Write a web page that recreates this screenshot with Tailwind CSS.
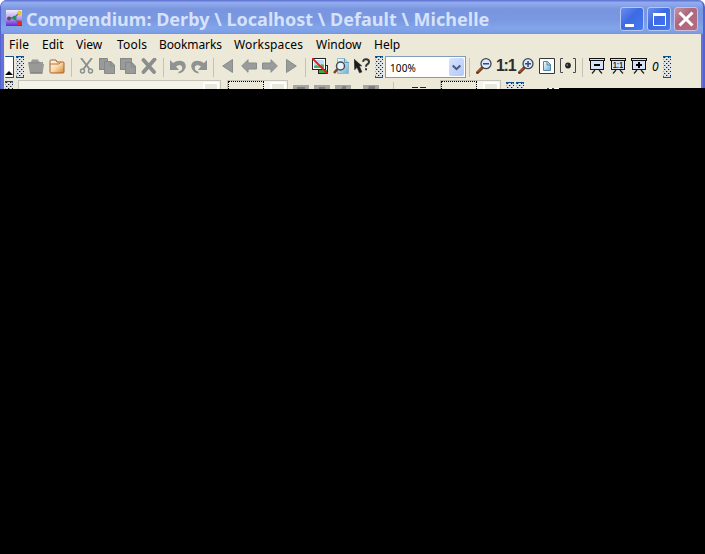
<!DOCTYPE html>
<html lang="en">
<head>
<meta charset="utf-8">
<title>Compendium</title>
<script src="https://cdn.jsdelivr.net/npm/@tailwindcss/browser@4"></script>
</head>
<body class="bg-black w-[705px] h-[554px] overflow-hidden font-['Noto_Sans',sans-serif]">
<svg class="absolute w-0 h-0">
<defs>
<pattern id="dots" width="4" height="4" patternUnits="userSpaceOnUse"><rect width="4" height="4" fill="#dfe3e3"/><path d="M1 1h1v1H1zM3 3h1v1H3z" fill="#1c2024"/><path d="M2 1h1v1H2zM0 3h1v1H0z" fill="#a4a9ac"/></pattern>
<linearGradient id="orange" x1="0" y1="0" x2="1" y2="1"><stop offset="0" stop-color="#fff9ea"/><stop offset=".5" stop-color="#f9dcb0"/><stop offset="1" stop-color="#dc8128"/></linearGradient>
<linearGradient id="logo" x1="0" y1="0" x2="0" y2="1"><stop offset="0" stop-color="#f3edff"/><stop offset=".5" stop-color="#b6a0ee"/><stop offset="1" stop-color="#6525d0"/></linearGradient>
<linearGradient id="sky" x1="0" y1="0" x2="1" y2="1"><stop offset="0" stop-color="#fff"/><stop offset="1" stop-color="#6faed0"/></linearGradient>
<symbol id="grip" viewBox="0 0 8 22"><rect width="8" height="22" fill="url(#dots)"/><path d="M0 0h8v1H0zM0 21h8v1H0z" fill="#12508f"/><path d="M0 1h1v1H0zM7 1h1v1H7zM0 20h1v1H0zM7 20h1v1H7z" fill="#31679d"/></symbol>
<symbol id="lens" viewBox="0 0 16 16"><path d="M6 10L1.500 14.500" stroke="#6e3213" stroke-width="3" stroke-linecap="round"/><path d="M5.500 10L1.500 14" stroke="#c77745" stroke-width="1"/><circle cx="10" cy="5.700" r="5" fill="#d8e8ff" stroke="#42464e" stroke-width="1.300"/></symbol>
<symbol id="board" viewBox="0 0 16 16"><path d="M6 12L3 15.500M10 12l3 3.500" stroke="#222" stroke-width="1.200"/><path d="M1 3h14v9H1z" fill="#111"/><path d="M2 3h12v8H2z" fill="#d4e2fa"/><path d="M0 0h16v3H0z" fill="#111"/><path d="M1 1h14v1H1z" fill="#d8e2f4"/></symbol>
</defs>
</svg>
<div class="relative w-[705px] h-[89px] overflow-hidden bg-white">
<div class="w-full h-full flex flex-col overflow-hidden rounded-t-[7px] bg-[#6372dc] border-l border-r-2 border-[#5364cf]">
  <header class="h-[34px] shrink-0 flex items-center bg-[linear-gradient(180deg,#6379d5_0,#6379d5_1px,#91acee_2px,#8ba5ea_5px,#7995df_9px,#7a98e1_20px,#82a5ea_28px,#7d9ee6_32px,#7694e0_34px)]">
    <svg class="ml-[5px] w-4 h-4 shrink-0 mt-[2px]" viewBox="0 0 16 16"><rect width="16" height="16" fill="url(#logo)"/><path d="M3 8h5l5-5M8 8l5 5" stroke="#6d6485" stroke-width="1.300" fill="none"/><circle cx="3" cy="8.500" r="1.900" fill="#55505c"/><circle cx="8.500" cy="7.800" r="2.100" fill="#179b45"/><circle cx="13.500" cy="2.700" r="2.200" fill="#e5c91d"/><circle cx="13.500" cy="13" r="2.400" fill="#e42924"/></svg>
    <h1 class="ml-[4px] mt-[4px] w-[594px] shrink-0 whitespace-nowrap text-[18px] leading-[24px] font-bold text-[#d6e2fb] tracking-[0.02px]">Compendium: Derby \ Localhost \ Default \ Michelle</h1>
    <div class="flex gap-[3px] mt-[3px]">
      <div class="w-[24px] h-[24px] rounded-[3px] border border-[#b4c8f5] bg-[linear-gradient(135deg,#6b8fee,#3d6ae2_45%,#477af0)]"><svg class="w-full h-full" viewBox="0 0 22 22"><path d="M4 16h9v3H4z" fill="#fff"/></svg></div>
      <div class="w-[24px] h-[24px] rounded-[3px] border border-[#b4c8f5] bg-[linear-gradient(135deg,#6b8fee,#3d6ae2_45%,#477af0)]"><svg class="w-full h-full" viewBox="0 0 22 22"><path d="M5.500 6.500h12v11h-12z" fill="none" stroke="#fff"/><path d="M5 5h13v3H5z" fill="#fff"/></svg></div>
      <div class="w-[24px] h-[24px] rounded-[3px] border border-[#d2bcdc] bg-[linear-gradient(135deg,#c5949f,#ad687e_40%,#b56c7e)]"><svg class="w-full h-full" viewBox="0 0 22 22"><path d="M4.500 4.500l13 13M17.500 4.500l-13 13" stroke="#fff" stroke-width="3"/></svg></div>
    </div>
  </header>
  <main class="h-[55px] ml-[3px] mr-[2px] bg-[#ece9d8] overflow-hidden">
    <nav class="h-[22px] pl-[5px] flex items-center text-[12px] leading-[22px] text-black whitespace-nowrap">
      <span class="w-[33px] tracking-[.3px]">File</span><span class="w-[34px]">Edit</span><span class="w-[41px]">View</span><span class="w-[42px] tracking-[.2px]">Tools</span><span class="w-[75px] tracking-[-.1px]">Bookmarks</span><span class="w-[82px] tracking-[.15px]">Workspaces</span><span class="w-[58px]">Window</span><span>Help</span>
    </nav>
    <div class="h-[22px] pl-[1px] flex items-center [&>*]:shrink-0 [&>svg.h-4]:mb-[2px]">
      <div class="w-[9px] h-[22px] rounded-[1px] bg-white border-y border-r border-[#164e87] flex items-end"><svg class="w-[8px] h-[7px]" viewBox="0 0 8 7"><path d="M4 1l4 4H0z" fill="#000"/></svg></div>
      <svg class="ml-[2px] w-[8px] h-[22px]"><use href="#grip"/></svg>
      <svg class="ml-[4px] w-4 h-4" viewBox="0 0 16 16"><path d="M0 4h3l1-2.500h6l1 2.500h4v2h1l-1.500 10H2z" fill="#999a98"/><path d="M1 5h9l2-1M3 14.500h11" stroke="#858786" fill="none"/></svg>
      <svg class="ml-[5px] w-4 h-4" viewBox="0 0 16 16"><path d="M1 14V3q0-1 1-1h5l1 2h6q1 0 1 1v9q0 1-1 1H2q-1 0-1-1z" fill="url(#orange)" stroke="#a56330"/><path d="M1 6h9l2-2" stroke="#b8763c" fill="none"/></svg>
      <i class="ml-[6px] w-px h-[19px] bg-[#c5c2b2]"></i>
      <svg class="ml-[7px] w-4 h-4" viewBox="0 0 16 16" fill="none" stroke="#8e9190" stroke-width="2"><path d="M2 0l8.500 11M13 0L4.500 11"/><circle cx="3.500" cy="13" r="2" stroke-width="1.500"/><circle cx="11.500" cy="13" r="2" stroke-width="1.500"/></svg>
      <svg class="ml-[4px] w-4 h-4" viewBox="0 0 16 16"><path d="M0 0h8v12H0zM6 3h6l4 4v9H6z" fill="#999b9a"/><path d="M.5.5h8v3M.5.5v11h5M5.500 15.500V3.500h6l4 4v8zM11.500 4v4h4" stroke="#868988" fill="none"/></svg>
      <svg class="ml-[5px] w-4 h-4" viewBox="0 0 16 16"><path d="M0 0h12v12H0zM6 4h6l4 4v8H6z" fill="#999b9a"/><path d="M.5.5h11v3M.5.5v11h5M5.500 15.500V4.500h6l4 4v7zM11.500 5v4h4" stroke="#868988" fill="none"/></svg>
      <svg class="ml-[5px] w-4 h-4" viewBox="0 0 16 16"><path d="M2.500 2l10.500 12M13.500 1.500L2.500 14" stroke="#8b8e8d" stroke-width="3.800" stroke-linecap="round"/></svg>
      <i class="ml-[6px] w-px h-[19px] bg-[#c5c2b2]"></i>
      <svg class="ml-[6px] w-4 h-4" viewBox="0 0 16 16"><path d="M0 2l3 3q6-4 11-1 3 3 1 7-2 4-7 4.500l1-2q4-1 3-5-2-3-6 0l3 3.500H0z" fill="#8f9392"/></svg>
      <svg class="ml-[5px] w-4 h-4 -scale-x-100" viewBox="0 0 16 16"><path d="M0 2l3 3q6-4 11-1 3 3 1 7-2 4-7 4.500l1-2q4-1 3-5-2-3-6 0l3 3.500H0z" fill="#8f9392"/></svg>
      <i class="ml-[6px] w-px h-[19px] bg-[#c5c2b2]"></i>
      <svg class="ml-[8px] w-[12px] h-4" viewBox="0 0 12 16"><path d="M10.500 1.500v13L.7 8z" fill="#9a9c9c" stroke="#898c8c"/></svg>
      <svg class="ml-[7px] w-4 h-4" viewBox="0 0 16 16"><path d="M.7 8L7 1.700V5h8.500v6H7v3.300z" fill="#9a9c9c" stroke="#898c8c"/></svg>
      <svg class="ml-[5px] w-4 h-4 -scale-x-100" viewBox="0 0 16 16"><path d="M.7 8L7 1.700V5h8.500v6H7v3.300z" fill="#9a9c9c" stroke="#898c8c"/></svg>
      <svg class="ml-[7px] mr-px w-[12px] h-4 -scale-x-100" viewBox="0 0 12 16"><path d="M10.500 1.500v13L.7 8z" fill="#9a9c9c" stroke="#898c8c"/></svg>
      <i class="ml-[7px] w-px h-[19px] bg-[#c5c2b2]"></i>
      <svg class="ml-[6px] w-4 h-4" viewBox="0 0 16 16"><rect x="6.500" y="7.500" width="9" height="8" fill="#dcecff" stroke="#222"/><path d="M7 12h8v3H7z" fill="#43a34b"/><rect x=".5" y=".5" width="13" height="11" fill="#fff" stroke="#222"/><path d="M2 2h10v6H2z" fill="#bcdcf8"/><path d="M2 8l2-1 3 1 3-2 2 1v3H2z" fill="#5cab4e"/><path d="M0 0l15.500 15.500" stroke="#f01414" stroke-width="1.900"/></svg>
      <svg class="ml-[5px] w-4 h-4" viewBox="0 0 16 16"><path d="M4.500.5h7l4 4v11h-11z" fill="url(#sky)" stroke="#8fb8cf"/><path d="M11.500.5v4h4" fill="#b5d8e8" stroke="#6497b3"/><path d="M4.500 11L1 15" stroke="#7e421f" stroke-width="2.500"/><circle cx="7.500" cy="8" r="4" fill="#e8f5ff" stroke="#444c56" stroke-width="1.500"/></svg>
      <svg class="ml-[5px] w-4 h-4" viewBox="0 0 16 16"><path d="M0 1l8 7H5.500L8 14l-2.500 1L3 9.500.5 12z" fill="#1b1b1b" stroke="#444" stroke-width=".5"/><path d="M9.300 3.800Q9 1.200 12 1.200q3 0 3 2.500 0 1.800-1.800 2.700Q12 7 12 8.800M12 10.300v2" fill="none" stroke="#333" stroke-width="2"/></svg>
      <svg class="ml-[5px] w-[8px] h-[22px]"><use href="#grip"/></svg>
      <div class="ml-[2px] w-[81px] h-[22px] bg-white border border-[#7f9db9] flex items-center justify-between pl-[4px] pr-px"><span class="text-[10px] tracking-[.1px] leading-[20px] pt-px">100%</span><div class="w-[15px] h-[18px] rounded-[2px] bg-[linear-gradient(135deg,#d8e4ff,#b2c8f8)] flex items-center justify-center"><svg class="w-[9px] h-[7px]" viewBox="0 0 9 7"><path d="M.7 1.500l3.800 3.700 3.800-3.700" fill="none" stroke="#465b80" stroke-width="2"/></svg></div></div>
      <i class="ml-[3px] w-px h-[19px] bg-[#c5c2b2]"></i>
      <svg class="ml-[6px] w-4 h-4" viewBox="0 0 16 16"><use href="#lens"/><path d="M7 5h6v1.500H7z" fill="#354b70"/></svg>
      <span class="ml-[4px] w-[19px] text-[16px] leading-[18px] mb-[2px] font-bold text-[#2d2d2d] tracking-[-1.300px] whitespace-nowrap font-['Liberation_Sans',sans-serif]">1:1</span>
      <svg class="ml-[3px] w-4 h-4" viewBox="0 0 16 16"><use href="#lens"/><path d="M7 5h6v1.500H7zM9.300 3h1.500v6H9.300z" fill="#354b70"/></svg>
      <svg class="ml-[5px] w-4 h-4" viewBox="0 0 16 16"><path d="M.5.5h15v15H.5z" fill="#fff" stroke="#383838"/><path d="M4.500 3.500h4l3 3v6h-7z" fill="url(#sky)" stroke="#4e88a9"/><path d="M8 3.500v3.500h4" fill="none" stroke="#4e88a9"/></svg>
      <svg class="ml-[5px] w-4 h-4" viewBox="0 0 16 16"><path d="M3 .5H.5v14H3M13 .5h2.500v14H13" stroke="#4a4a4a" fill="none"/><circle cx="8" cy="7.500" r="2.900" fill="#262626"/><circle cx="7.200" cy="7" r=".8" fill="#aaa"/></svg>
      <i class="ml-[6px] w-px h-[19px] bg-[#c5c2b2]"></i>
      <svg class="ml-[6px] w-4 h-4" viewBox="0 0 16 16"><use href="#board"/><path d="M5 6h6v2H5z"/></svg>
      <svg class="ml-[5px] w-4 h-4" viewBox="0 0 16 16"><use href="#board"/><text x="8" y="10" text-anchor="middle" textLength="10" lengthAdjust="spacingAndGlyphs" font-family="Liberation Sans" font-weight="bold" font-size="9" fill="#222">1:1</text></svg>
      <svg class="ml-[5px] w-4 h-4" viewBox="0 0 16 16"><use href="#board"/><path d="M5 6h6v2H5zM7 4h2v6H7z"/></svg>
      <span class="ml-[5px] w-[8px] text-[12px] italic leading-[18px]">0</span>
      <svg class="ml-[3px] w-[8px] h-[22px]"><use href="#grip"/></svg>
    </div>
    <div class="h-[11px] pt-[2px] pl-[1px] flex overflow-hidden [&>*]:shrink-0">
      <svg class="mt-px w-[8px] h-[22px]"><use href="#grip"/></svg>
      <div class="ml-[5px] w-[203px] h-[22px] border border-[#c5c3b7] bg-[#f4f3ea] flex justify-end p-px"><div class="w-[16px] h-[18px] rounded-[2px] border-2 border-white bg-[#eae8dc]"></div></div>
      <div class="ml-[6px] w-[61px] h-[22px] border border-[#c5c3b7] bg-[#f4f3ea] flex justify-between"><div class="w-[36px] h-[20px] bg-[#ece9d8] border border-dotted border-black"></div><div class="m-px w-[16px] h-[18px] rounded-[2px] border-2 border-white bg-[#eae8dc]"></div></div>
      <svg class="ml-[5px] mt-[5px] w-4 h-4" viewBox="0 0 16 16"><path d="M0 0h16v16H0z" fill="#a5a5a3"/><path d="M4 2h8v3H4z" fill="#7c7f7e"/></svg>
      <svg class="ml-[5px] mt-[5px] w-4 h-4" viewBox="0 0 16 16"><path d="M0 0h16v16H0z" fill="#a5a5a3"/><path d="M5 2h6v3H5z" fill="#7c7f7e"/></svg>
      <svg class="ml-[5px] mt-[5px] w-4 h-4" viewBox="0 0 16 16"><path d="M0 0h16v16H0z" fill="#a5a5a3"/><path d="M8 1h3v3H6z" fill="#7c7f7e"/></svg>
      <svg class="ml-[12px] mt-[5px] w-4 h-4" viewBox="0 0 16 16"><path d="M0 0h16v16H0z" fill="#a5a5a3"/><path d="M6 1h6v3H5z" fill="#7c7f7e"/></svg>
      <i class="ml-[14px] mt-[2px] w-px h-[19px] bg-[#c5c2b2]"></i>
      <svg class="ml-[18px] mt-[5px] w-[16px] h-[16px]" viewBox="0 0 16 16"><path d="M0 2.500h6M8 2.500h6" stroke="#222"/></svg>
      <div class="ml-[12px] w-[61px] h-[22px] border border-[#c5c3b7] bg-[#f4f3ea] flex justify-between"><div class="w-[36px] h-[20px] bg-[#ece9d8] border border-dotted border-black"></div><div class="m-px w-[16px] h-[18px] rounded-[2px] border-2 border-white bg-[#eae8dc]"></div></div>
      <svg class="ml-[5px] mt-[2px] w-[8px] h-[22px]"><use href="#grip"/></svg>
      <svg class="ml-[2px] mt-[2px] w-[8px] h-[22px]"><use href="#grip"/></svg>
    </div>
  </main>
</div>
<svg class="absolute bottom-0 right-0 w-[158px] h-[1px]" viewBox="0 0 158 1"><path d="M0 0h2v1H0zM5 0h2v1H5z" fill="#444"/><path d="M2 0h3v1H2zM8 0h4v1H8z" fill="#fff"/><path d="M12 0h146v1H12z"/></svg>
</div>
</body>
</html>
